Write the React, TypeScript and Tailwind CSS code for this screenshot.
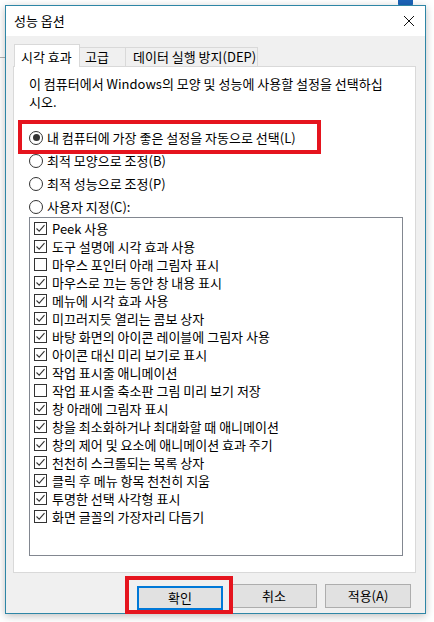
import React from "react";

const FONT = { fontFamily: '"Noto Sans CJK KR", "Noto Sans", sans-serif' };

interface Item {
  label: string;
  checked: boolean;
}

const ITEMS: Item[] = [
  { label: "Peek 사용", checked: true },
  { label: "도구 설명에 시각 효과 사용", checked: true },
  { label: "마우스 포인터 아래 그림자 표시", checked: false },
  { label: "마우스로 끄는 동안 창 내용 표시", checked: true },
  { label: "메뉴에 시각 효과 사용", checked: true },
  { label: "미끄러지듯 열리는 콤보 상자", checked: true },
  { label: "바탕 화면의 아이콘 레이블에 그림자 사용", checked: true },
  { label: "아이콘 대신 미리 보기로 표시", checked: true },
  { label: "작업 표시줄 애니메이션", checked: true },
  { label: "작업 표시줄 축소판 그림 미리 보기 저장", checked: false },
  { label: "창 아래에 그림자 표시", checked: true },
  { label: "창을 최소화하거나 최대화할 때 애니메이션", checked: true },
  { label: "창의 제어 및 요소에 애니메이션 효과 주기", checked: true },
  { label: "천천히 스크롤되는 목록 상자", checked: true },
  { label: "클릭 후 메뉴 항목 천천히 지움", checked: true },
  { label: "투명한 선택 사각형 표시", checked: true },
  { label: "화면 글꼴의 가장자리 다듬기", checked: true },
];

function Radio({ checked, label }: { checked?: boolean; label: string }) {
  return (
    <div className="flex items-center h-[23px]">
      <span className="w-[14px] h-[14px] rounded-full border border-[#333] bg-white flex items-center justify-center">
        {checked && <span className="w-[7px] h-[7px] rounded-full bg-[#333]" />}
      </span>
      <span className="ml-[4px] text-[13px] text-black leading-none whitespace-nowrap">{label}</span>
    </div>
  );
}

function Check({ item }: { item: Item }) {
  return (
    <div className="flex items-center h-[18px]">
      <span className="w-[13px] h-[13px] border border-[#333] bg-white flex items-center justify-center">
        {item.checked && (
          <svg width="11" height="11" viewBox="0 0 11 11">
            <path d="M1.5 5.5 L4.2 8.2 L9.5 2.2" fill="none" stroke="#333" strokeWidth="1.1" />
          </svg>
        )}
      </span>
      <span className="ml-[5px] text-[13px] text-black leading-none whitespace-nowrap">{item.label}</span>
    </div>
  );
}

export default function App() {
  return (
    <div className="w-[434px] h-[622px] bg-white relative overflow-hidden" style={FONT}>
      {/* background window bits */}
      <div className="absolute left-[398px] top-0 w-[15px] h-[6px] bg-[#1c64b8] rounded-b-[2px]" />
      <div className="absolute left-0 top-[57px] w-[6px] h-px bg-[#b5b5b5]" />

      {/* dialog */}
      <div className="ml-[5px] mt-[5px] w-[421px] h-[609px] border border-[#2e86a6] bg-[#f0f0f0] shadow-[0_2px_8px_rgba(0,0,0,0.25)] flex flex-col relative">
        {/* title bar */}
        <div className="h-[30px] bg-white flex items-center justify-between pl-[8px] pr-[10px]">
          <span className="text-[13px] text-black">성능 옵션</span>
          <svg width="12" height="12" viewBox="0 0 12 12">
            <path d="M1 1 L11 11 M11 1 L1 11" stroke="#111" strokeWidth="1" />
          </svg>
        </div>

        {/* body */}
        <div className="pt-[8px] pl-[7px] pr-[8px]">
          {/* tabs */}
          <div className="flex items-end h-[22px] pl-[1px]">
            <div className="relative z-10 h-[23px] -mb-px w-[66px] bg-white border border-b-0 border-[#d9d9d9] flex items-start pt-[2px] pl-[6px] text-[13px] text-black whitespace-nowrap">
              시각 효과
            </div>
            <div className="h-[19px] w-[47px] -ml-px bg-[#f0f0f0] border border-b-0 border-[#d9d9d9] flex items-center pl-[5px] text-[13px] text-black whitespace-nowrap">
              고급
            </div>
            <div className="h-[19px] w-[133px] -ml-px bg-[#f0f0f0] border border-b-0 border-[#d9d9d9] flex items-center pl-[7px] text-[13px] text-black whitespace-nowrap">
              데이터 실행 방지(DEP)
            </div>
          </div>

          {/* panel */}
          <div className="h-[507px] w-[403px] bg-white border border-[#d9d9d9] pl-[15px] pt-[8px]">
            <p className="text-[13px] leading-[18px] text-black whitespace-nowrap">
              이 컴퓨터에서 Windows의 모양 및 성능에 사용할 설정을 선택하십
              <br />
              시오.
            </p>

            <div className="mt-[15px] relative">
              <Radio checked label="내 컴퓨터에 가장 좋은 설정을 자동으로 선택(L)" />
              <Radio label="최적 모양으로 조정(B)" />
              <Radio label="최적 성능으로 조정(P)" />
              <Radio label="사용자 지정(C):" />
              {/* red annotation */}
              <div className="absolute left-[-11px] top-[-6px] w-[303px] h-[34px] border-4 border-[#e5141e]" />
            </div>

            <div className="mt-[-1px] w-[374px] h-[339px] border border-[#828790] bg-white pt-px pl-[4px]">
              {ITEMS.map((it) => (
                <Check key={it.label} item={it} />
              ))}
            </div>
          </div>

          {/* buttons */}
          <div className="flex justify-end gap-[8px] mt-[11px] pr-[6px]">
            <div className="relative">
              <button className="w-[86px] h-[24px] bg-[#e1e1e1] border-2 border-[#0078d7] text-[13px] text-black">
                확인
              </button>
              <div className="absolute left-[-12px] top-[-8px] w-[108px] h-[38px] border-4 border-[#e5141e]" />
            </div>
            <button className="w-[86px] h-[24px] bg-[#e1e1e1] border border-[#adadad] text-[13px] text-black">
              취소
            </button>
            <button className="w-[86px] h-[24px] bg-[#e1e1e1] border border-[#adadad] text-[13px] text-black">
              적용(A)
            </button>
          </div>
        </div>
      </div>
    </div>
  );
}
